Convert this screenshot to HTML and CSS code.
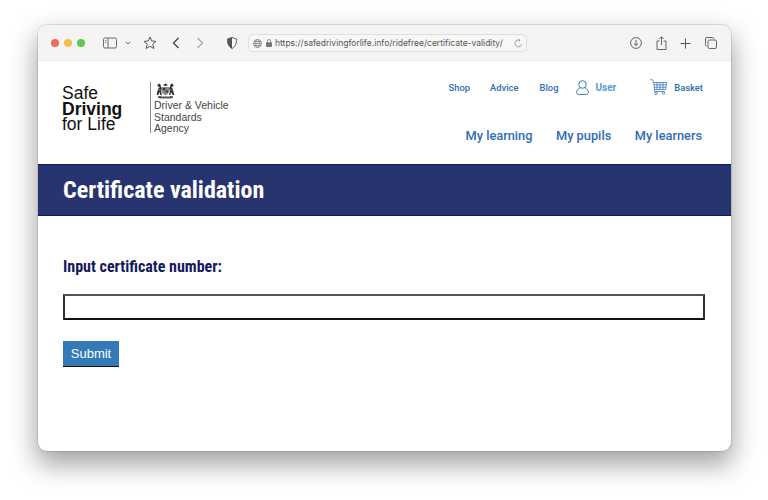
FILE: index.html
```html
<!DOCTYPE html>
<html lang="en">
<head>
<meta charset="utf-8">
<title>Certificate validation</title>
<link rel="stylesheet" href="styles.css">
</head>
<body>
<div class="window">
  <div class="toolbar">
    <div class="lights"><i class="light red"></i><i class="light yellow"></i><i class="light green"></i></div>
    <svg class="ic sidebar" width="14" height="12" viewBox="0 0 14 12" fill="none" stroke="#6a6a6a"><rect x=".5" y="1" width="13" height="10" rx="1.5"/><path d="M5 1v10"/><path d="M2 3.500h1.500M2 5.500h1.500" stroke-width=".8"/></svg>
    <svg class="ic chevron" width="6" height="4" viewBox="0 0 6 4" fill="none" stroke="#777"><path d="M.7.7 3 3l2.300-2.300"/></svg>
    <svg class="ic star" width="14" height="14" viewBox="0 0 14 14" fill="none" stroke="#555"><path d="M7 1l1.800 4 4.200.4-3.200 2.800 1 4.300L7 10.300 3.200 12.500l1-4.300L1 5.400 5.200 5z"/></svg>
    <svg class="ic back" width="8" height="12" viewBox="0 0 8 12" fill="none" stroke="#444" stroke-width="1.300"><path d="M6.500 1 1.500 6l5 5"/></svg>
    <svg class="ic forward" width="8" height="12" viewBox="0 0 8 12" fill="none" stroke="#aaa" stroke-width="1.300"><path d="M1.500 1l5 5-5 5"/></svg>
    <svg class="ic shield" width="10" height="12" viewBox="0 0 10 12"><path d="M5 .5 9.500 2c0 4.500-1 7.500-4.500 9.500C1.500 9.500.5 6.500.5 2z" fill="#fff" stroke="#555"/><path d="M5 .5.500 2c0 4.500 1 7.500 4.500 9.500z" fill="#555"/></svg>
    <div class="urlbar">
      <svg width="9" height="9" viewBox="0 0 9 9" fill="none" stroke="#777" stroke-width=".7"><circle cx="4.500" cy="4.500" r="4"/><ellipse cx="4.500" cy="4.500" rx="1.800" ry="4"/><path d="M.5 4.500h8M1 2.500h7M1 6.500h7"/></svg>
      <svg class="lock" width="6" height="8" viewBox="0 0 6 8"><rect y="3.200" width="6" height="4.800" rx=".8" fill="#777"/><path d="M1.300 3.500V2.200a1.700 1.700 0 0 1 3.400 0v1.300" fill="none" stroke="#777" stroke-width=".8"/></svg>
      <span class="url">https://safedrivingforlife.info/ridefree/certificate-validity/</span>
      <svg class="reload" width="9" height="9" viewBox="0 0 9 9" fill="none" stroke="#888" stroke-width=".8"><path d="M7.800 5a3.400 3.400 0 1 1-2-3.700"/><path d="M4.500.2l1.500 1.100L4.700 2.600"/></svg>
    </div>
    <div class="tools">
      <svg width="12" height="12" viewBox="0 0 12 12" fill="none" stroke="#555" stroke-width=".9"><circle cx="6" cy="6" r="5.400"/><path d="M6 3v5.500M3.900 6.500 6 8.500l2.100-2"/></svg>
      <svg width="11" height="14" viewBox="0 0 11 14" fill="none" stroke="#555" stroke-width=".9"><path d="M3.500 5H1v8.500h9V5H7.500M5.500 9V.8M3.300 3 5.500.8 7.700 3"/></svg>
      <svg width="11" height="11" viewBox="0 0 11 11" fill="none" stroke="#555" stroke-width="1"><path d="M5.500.5v10M.5 5.500h10"/></svg>
      <svg width="12" height="12" viewBox="0 0 12 12" fill="none" stroke="#555" stroke-width=".9"><rect x="3" y="3" width="8.500" height="8.500" rx="1.500"/><path d="M9 1.700A1.500 1.500 0 0 0 7.700.5H2A1.500 1.500 0 0 0 .5 2v5.700A1.500 1.500 0 0 0 1.700 9"/></svg>
    </div>
  </div>

  <header class="site-header">
    <div class="logo">
      <div class="logo-title"><span>Safe</span><strong>Driving</strong><span>for Life</span></div>
      <div class="dvsa">
        <svg class="crest" width="19" height="17" viewBox="0 0 19 17">
          <g fill="#2b2b2b">
            <path d="M7.500 3.800 8 1.800l.9.700.6-1.500.6 1.500.9-.7.500 2z"/>
            <path d="M6 5h7v4.500c0 2-1.500 3-3.500 3.700C7.500 12.500 6 11.500 6 9.500z" fill="#8a8a8a"/>
            <path d="M7.200 6h2v2.200h-2zM9.800 8.500h2v2h-2z"/>
            <path d="M1.200 3.500 3 1.500l1.500 1 .3 2 1 1.500-.6 4 .8 3H4.400l-.7-3-1.500 3H.6l1-4.500L3 5.500z"/>
            <path d="M17.800 3.500 16 1.500l-1.500 1-.3 2-1 1.500.6 4-.8 3h1.400l.7-3 1.500 3h1.600l-1-4.500L16 5.500z"/>
            <path d="M2.500 14h14l.8 1.500-2.300 1H4l-2.300-1z" fill="#555"/>
          </g>
          <path d="M2 4.500l2 1M17 4.500l-2 1M2.500 8h2M16.500 8h-2M5 14.500h9" stroke="#ddd" stroke-width=".6"/>
        </svg>
        <p class="dvsa-name">Driver &amp; Vehicle<br>Standards<br>Agency</p>
      </div>
    </div>
    <nav class="navs">
      <div class="nav-top">
        <a class="shop">Shop</a>
        <a class="advice">Advice</a>
        <a class="blog">Blog</a>
        <svg class="user-ic" width="13" height="15" viewBox="0 0 13 15" fill="none" stroke="#337ab7"><circle cx="6.500" cy="4.500" r="3.800"/><path d="M4.200 7.700C2 8.700.6 10.500.6 12.500c0 1.200.8 1.900 2 1.900h7.800c1.200 0 2-.7 2-1.900 0-2-1.400-3.800-3.600-4.800"/></svg>
        <a class="user">User</a>
        <svg class="cart-ic" width="17" height="16" viewBox="0 0 17 16" fill="none" stroke="#3a78b5" stroke-width=".8"><path d="M.3.700h2l1.400 2.300 1 9.500h10"/><path d="M3.700 3.500h12.800l-.8 7H4.500M4 5.800h12.300M4.300 8.200h11.700M7 3.500v7M10 3.500v7M13 3.500v7"/><circle cx="6" cy="14.200" r="1.300"/><circle cx="13.500" cy="14.200" r="1.300"/></svg>
        <a class="basket">Basket</a>
      </div>
      <div class="nav-main">
        <a>My learning</a>
        <a>My pupils</a>
        <a>My learners</a>
      </div>
    </nav>
  </header>

  <div class="hero"><h1>Certificate validation</h1></div>

  <main class="content">
    <label class="field-label" for="cert">Input certificate number:</label>
    <input class="field" id="cert" type="text">
    <button class="submit" type="button">Submit</button>
  </main>
</div>
</body>
</html>
```
FILE: styles.css
```css
* { box-sizing: border-box; }
html, body { margin: 0; height: 500px; overflow: hidden; background: #fff; }
body { padding: 25px 37px 49px 38px; font-family: Roboto, sans-serif; }

.window {
  height: 426px;
  background: #fff;
  border-radius: 9px;
  overflow: hidden;
  box-shadow: 0 0 0 1px rgba(0,0,0,.1), 0 12px 26px 2px rgba(0,0,0,.36);
}

.toolbar {
  height: 36px;
  background: #f5f4f3;
  border-bottom: 1px solid #ececec;
  display: flex;
  align-items: center;
  padding-left: 13px;
  padding-top: 1px;
}
.lights { display: flex; gap: 5px; }
.light { width: 8px; height: 8px; border-radius: 50%; display: block; }
.red { background: #ec6a5e; }
.yellow { background: #f4bf4f; }
.green { background: #61c554; }
.ic { flex: none; display: block; }
.sidebar { margin-left: 18px; }
.chevron { margin-left: 8px; }
.star { margin-left: 12px; }
.back { margin-left: 15px; }
.forward { margin-left: 16px; }
.shield { margin-left: 23px; }

.urlbar {
  margin-left: 11px;
  width: 279px;
  height: 18px;
  border: 1px solid #dedede;
  border-radius: 5px;
  background: #f8f7f6;
  display: flex;
  align-items: center;
  padding-left: 4px;
  padding-right: 3px;
}
.lock { margin-left: 4px; }
.url {
  margin-left: 3px;
  font: 8.5px "Inter", sans-serif;
  color: #555;
  white-space: nowrap;
  flex: 1;
}
.tools { margin-left: 103px; display: flex; align-items: center; gap: 13.7px; }

.site-header {
  height: 103px;
  display: flex;
  justify-content: space-between;
  padding: 21px 28px 0 24px;
}
.logo { display: flex; }
.logo-title {
  width: 88px;
  height: 52px;
  padding-top: 4px;
  font: 17.5px/15.5px "Liberation Sans", sans-serif;
  color: #111;
  display: flex;
  flex-direction: column;
}
.logo-title strong { font-weight: 700; }
.dvsa {
  height: 51px;
  border-left: 1px solid #888;
  padding-left: 3px;
}
.crest { display: block; margin-left: 2px; }
.dvsa-name {
  margin: 1px 0 0;
  font: 10.500px/11.500px "Liberation Sans", sans-serif;
  color: #444;
  white-space: nowrap;
}

.navs { display: flex; flex-direction: column; align-items: flex-end; }
.nav-top { display: flex; align-items: center; height: 16px; margin-top: -3px; }
.nav-top a { font-size: 9.4px; font-weight: 500; color: #2f6db5; }
.advice { margin-left: 20px; }
.blog { margin-left: 21px; }
.user-ic { margin-left: 18px; }
.nav-top .user { margin-left: 6px; font-size: 10px; color: #5b9bd5; font-weight: 700; }
.cart-ic { margin-left: 34px; }
.basket { margin-left: 7px; }
.nav-main {
  display: flex;
  gap: 23.500px;
  margin-top: 33px;
  padding-right: 1px;
}
.nav-main a { font-size: 12.800px; line-height: 16px; font-weight: 500; color: #2f6db5; }

.hero {
  height: 52px;
  background: #27346f;
  border-top: 1px solid #10195c;
  border-bottom: 1px solid #10195c;
  padding-left: 25px;
  display: flex;
  align-items: center;
}
.hero h1 {
  margin: 0;
  font-family: "Roboto Condensed", Roboto, sans-serif;
  font-stretch: 75%;
  font-weight: 700;
  font-size: 24px;
  line-height: 28px;
  color: #fff;
}

.content { padding: 41px 26px 0 25px; display: flex; flex-direction: column; align-items: flex-start; }
.field-label {
  font-family: "Roboto Condensed", Roboto, sans-serif;
  font-stretch: 75%;
  font-weight: 700;
  font-size: 16px;
  line-height: 20px;
  color: #14195e;
}
.field {
  margin-top: 17px;
  width: 100%;
  height: 26px;
  border: 2px solid;
  border-color: #555 #333 #111 #333;
  background: #fff;
  padding: 0;
  outline: none;
}
.submit {
  margin-top: 21px;
  width: 56px;
  height: 26px;
  background: #337ab7;
  border: 0;
  border-bottom: 1px solid #111;
  color: #fff;
  font: 13px "Liberation Sans", sans-serif;
  padding: 0 0 1px;
}
```
